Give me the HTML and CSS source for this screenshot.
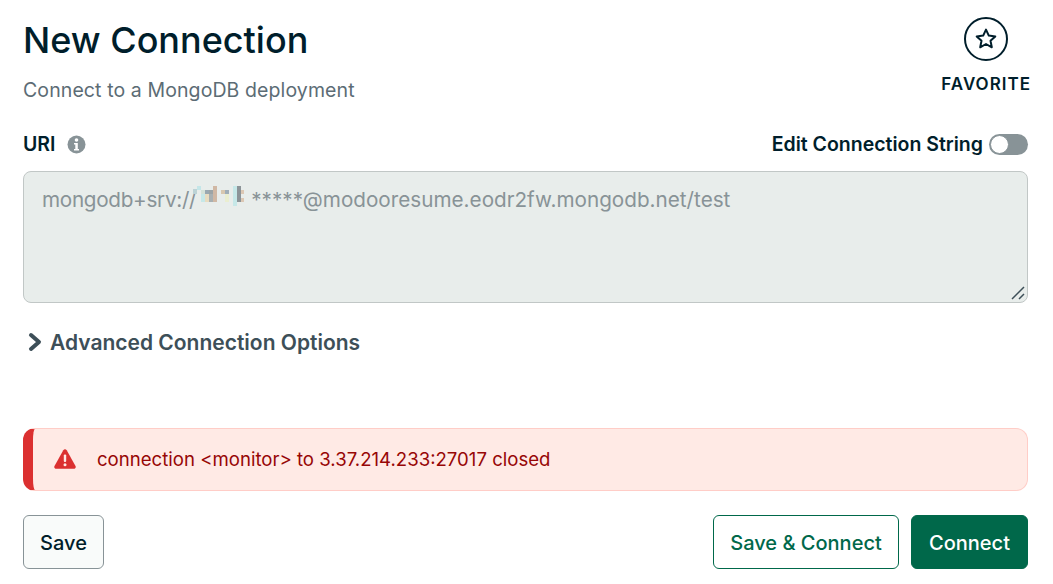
FILE: index.html
```html
<!DOCTYPE html>
<html lang="en">
<head>
  <meta charset="UTF-8" />
  <title>New Connection</title>
  <link rel="stylesheet" href="styles.css">
</head>
<body>
  <div class="container">
    <div class="header">
      <div>
        <h1>New Connection</h1>
        <p class="subtitle">Connect to a MongoDB deployment</p>
      </div>
      <div class="favorite">
        <span class="favorite-circle">
          <svg width="24" height="24" viewBox="0 0 24 24"><path d="M12 2.600l2.800 6 6.500.8-4.800 4.400 1.300 6.500L12 17l-5.800 3.300 1.300-6.500-4.800-4.400 6.500-.8z" fill="none" stroke="#001e2b" stroke-width="2" stroke-linejoin="round"/></svg>
        </span>
        <span class="favorite-label">FAVORITE</span>
      </div>
    </div>

    <div class="uri-row">
      <div class="uri-label">
        <label>URI</label>
        <svg width="19" height="19" viewBox="0 0 19 19"><circle cx="9.500" cy="9.500" r="9" fill="#889397"/><circle cx="9.500" cy="5" r="1.800" fill="#fff"/><path d="M7 8h3.800v6H12v1.600H7V14h1.300v-4.400H7z" fill="#fff"/></svg>
      </div>
      <div class="edit-toggle">
        <span>Edit Connection String</span>
        <span class="toggle"><span class="knob"></span></span>
      </div>
    </div>

    <div class="uri-box"><span class="uri-prefix">mongodb+srv://</span><svg class="mosaic" width="56" height="27" viewBox="0 0 56 27"><rect x="0" y="3" width="4" height="5" fill="#bcd3d6"/><rect x="4" y="0" width="4" height="4" fill="#c4e6e8"/><rect x="8" y="4" width="4" height="4" fill="#d4e2d8"/><rect x="8" y="8" width="4" height="8" fill="#c6e8e8"/><rect x="12" y="4" width="4" height="4" fill="#99a8b0"/><rect x="12" y="8" width="4" height="8" fill="#e8dcc0"/><rect x="16" y="4" width="4" height="4" fill="#9ca4a6"/><rect x="16" y="8" width="4" height="8" fill="#a8b0b2"/><rect x="20" y="0" width="4" height="16" fill="#d0b8a4"/><rect x="28" y="4" width="4" height="4" fill="#d8c8b0"/><rect x="32" y="4" width="4" height="4" fill="#a0aeb8"/><rect x="32" y="8" width="4" height="8" fill="#eaeed0"/><rect x="40" y="0" width="4" height="20" fill="#c6e8e8"/><rect x="44" y="0" width="4" height="16" fill="#8c9498"/><rect x="48" y="4" width="3" height="4" fill="#dcc8b4"/><rect x="48" y="12" width="3" height="4" fill="#dcc8b4"/></svg>*****@modooresume.eodr2fw.mongodb.net/test<svg class="grip" width="14" height="14" viewBox="0 0 14 14"><path d="M1 13L13 1M8 13l5-5" stroke="#3d4f58" stroke-width="1.500" fill="none"/></svg></div>

    <div class="advanced">
      <svg width="16" height="20" viewBox="0 0 16 20"><path d="M4 3l8 7-8 7" fill="none" stroke="#3d4f58" stroke-width="4" stroke-linecap="round" stroke-linejoin="round"/></svg>
      <span>Advanced Connection Options</span>
    </div>

    <div class="alert">
      <svg width="22" height="20" viewBox="0 0 22 20"><path d="M9.300 1.200c.8-1.400 2.600-1.400 3.400 0l8.800 15.800c.7 1.300-.2 2.800-1.700 2.800H2.200C.7 19.800-.2 18.300.5 17z" fill="#db3030"/><rect x="9.800" y="5.500" width="2.400" height="7.500" rx="1" fill="#ffeae5"/><circle cx="11" cy="15.800" r="1.500" fill="#ffeae5"/></svg>
      <span>connection &lt;monitor&gt; to 3.37.214.233:27017 closed</span>
    </div>

    <div class="actions">
      <button class="btn btn-save">Save</button>
      <div class="actions-right">
        <button class="btn btn-outline">Save &amp; Connect</button>
        <button class="btn btn-primary">Connect</button>
      </div>
    </div>
  </div>
</body>
</html>
```

FILE: styles.css
```css
body {
  font-family: Inter, Lato, sans-serif;
  margin: 0;
  background: #fff;
  color: #001e2b;
}
.container {
  padding: 0 25px 0 23px;
}
.header {
  display: flex;
  justify-content: space-between;
  height: 102px;
}
h1 {
  font-size: 36px;
  font-weight: 500;
  line-height: 44px;
  margin: 18px 0 0;
}
.subtitle {
  font-size: 19.5px;
  letter-spacing: 0.1px;
  line-height: 26px;
  margin: 15px 0 0;
  color: #5c6c75;
}
.favorite {
  display: flex;
  flex-direction: column;
  align-items: center;
  margin-right: -3px;
  padding-top: 17px;
}
.favorite-circle {
  width: 44px;
  height: 44px;
  box-sizing: border-box;
  border: 2px solid #001e2b;
  border-radius: 50%;
  display: flex;
  align-items: center;
  justify-content: center;
}
.favorite-label {
  font-size: 17px;
  font-weight: 600;
  letter-spacing: 1px;
  line-height: 22px;
  margin-top: 12px;
}
.uri-row {
  display: flex;
  justify-content: space-between;
  align-items: center;
  margin-top: 27px;
  height: 30px;
}
.uri-label {
  display: flex;
  align-items: center;
  gap: 12px;
  font-size: 19.5px;
  font-weight: 600;
}
.edit-toggle {
  display: flex;
  align-items: center;
  gap: 6px;
  font-size: 19.5px;
  font-weight: 600;
}
.toggle {
  width: 39px;
  height: 21px;
  background: #889397;
  border-radius: 11px;
  display: block;
  position: relative;
}
.knob {
  position: absolute;
  left: 1px;
  top: 1px;
  width: 19px;
  height: 19px;
  box-sizing: border-box;
  background: #fff;
  border: 1px solid #889397;
  border-radius: 50%;
}
.uri-box {
  position: relative;
  margin-top: 12px;
  height: 132px;
  box-sizing: border-box;
  padding: 14px 18px;
  background: #e8edeb;
  border: 1px solid #c1c7c6;
  border-radius: 8px;
  color: #889397;
  font-size: 20.7px;
  line-height: 27px;
}
.uri-prefix {
  letter-spacing: -0.3px;
}
.mosaic {
  vertical-align: top;
  margin: 0 2px 0 -3px;
}
.grip {
  position: absolute;
  right: 2px;
  bottom: 2px;
}
.advanced {
  display: flex;
  align-items: center;
  gap: 7px;
  margin: 24px 0 0 4px;
  height: 30px;
  color: #3d4f58;
  font-size: 21px;
  font-weight: 600;
}
.alert {
  display: flex;
  align-items: center;
  gap: 21px;
  margin-top: 71px;
  height: 63px;
  box-sizing: border-box;
  padding: 0 0 1px 21px;
  background: #ffeae5;
  border: 1px solid #ffcdc7;
  border-left: 10px solid #db3030;
  border-radius: 12px;
  color: #970606;
  font-size: 18.6px;
}
.actions {
  display: flex;
  justify-content: space-between;
  margin-top: 24px;
}
.actions-right {
  display: flex;
  gap: 12px;
}
.btn {
  height: 54px;
  box-sizing: border-box;
  border-radius: 6px;
  font-family: inherit;
  font-size: 20px;
  font-weight: 500;
  padding: 1px 0 0;
}
.btn-save {
  width: 81px;
  background: #f9fbfa;
  border: 1px solid #889397;
  color: #001e2b;
}
.btn-outline {
  width: 186px;
  background: #fff;
  border: 1px solid #00684a;
  color: #00684a;
}
.btn-primary {
  width: 117px;
  background: #00684a;
  border: 1px solid #00684a;
  color: #fff;
}
```
